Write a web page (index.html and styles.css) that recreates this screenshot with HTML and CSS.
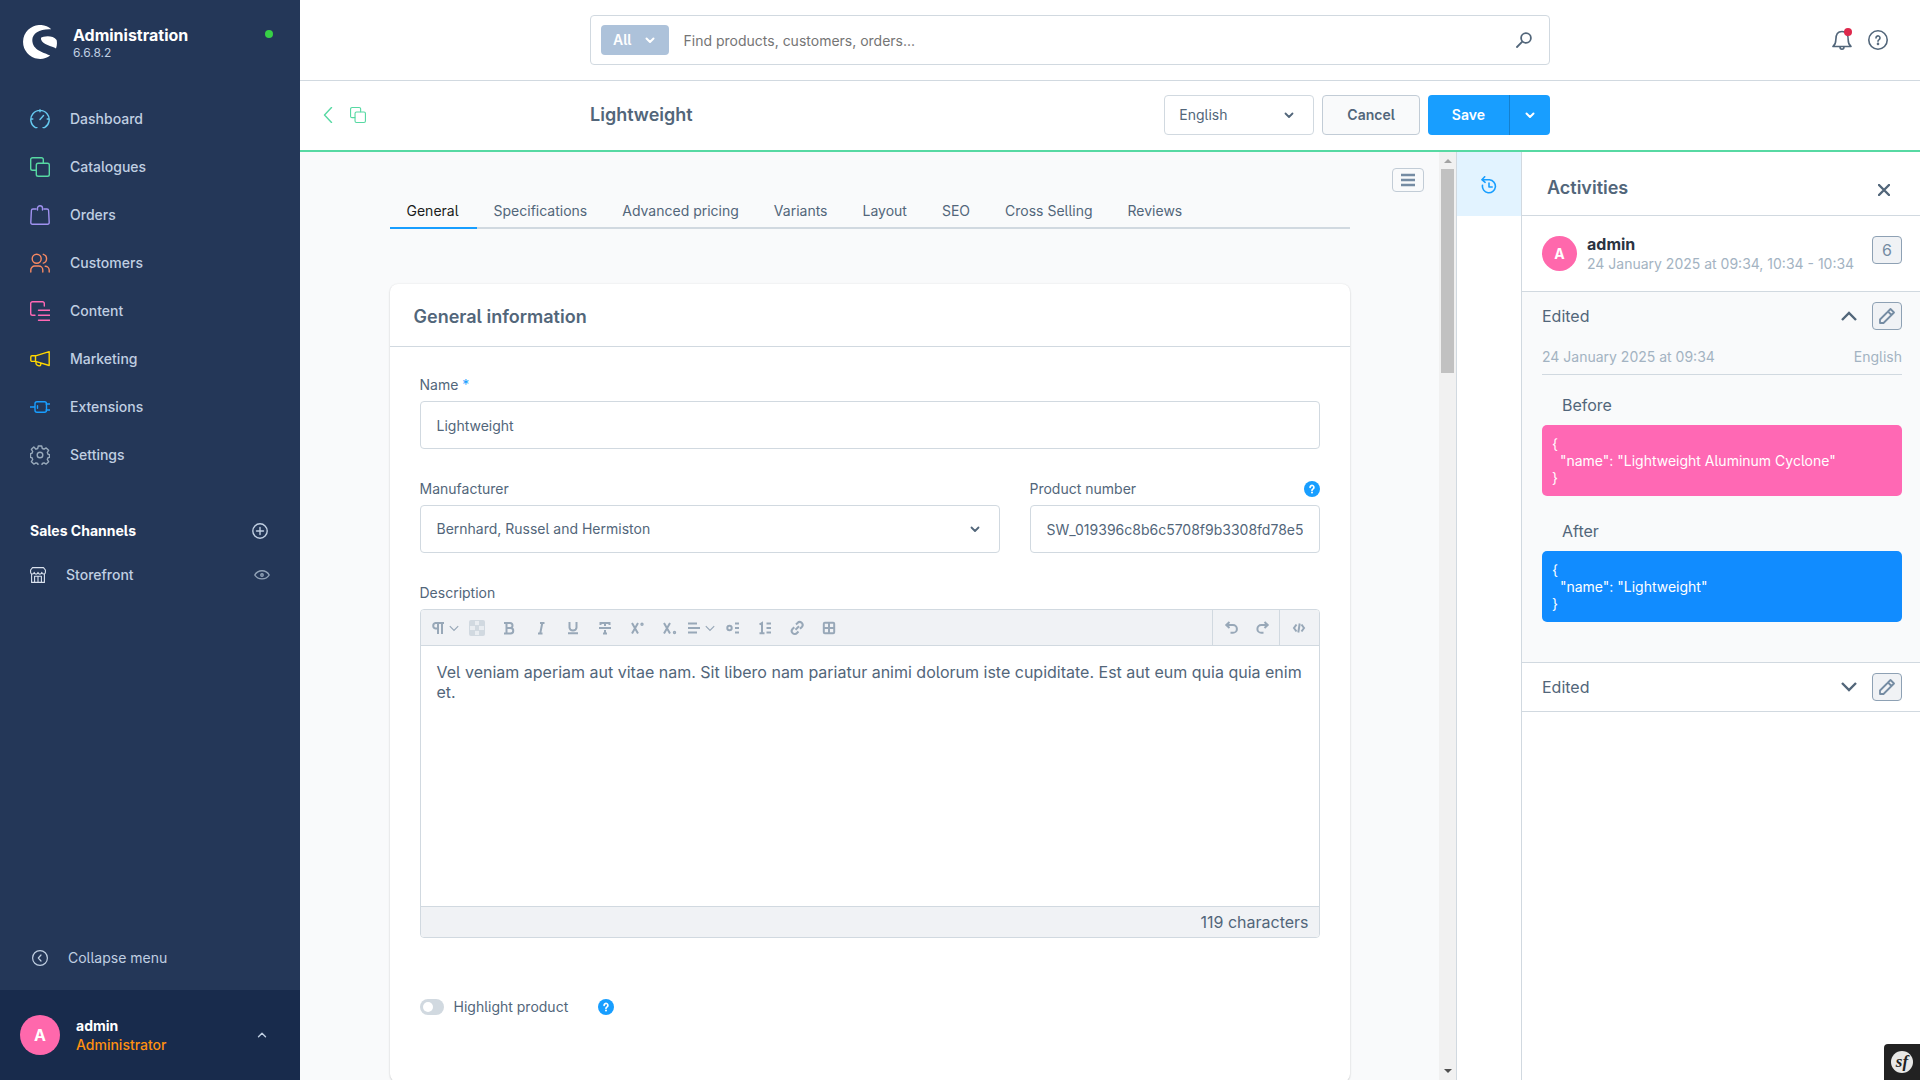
FILE: index.html
```html
<!DOCTYPE html>
<html lang="en">
<head>
<meta charset="utf-8">
<title>Lightweight | Products | Administration</title>
<link rel="stylesheet" href="styles.css">
</head>
<body>
<svg class="sprite" aria-hidden="true">
  <symbol id="chev-down" viewBox="0 0 10 10"><path d="M1.500 3.500 5 7l3.500-3.500"/></symbol>
  <symbol id="copy" viewBox="0 0 20 20"><path d="M13.300 6V2.500A1.800 1.800 0 0 0 11.500.700h-9A1.800 1.800 0 0 0 .700 2.500v9a1.800 1.800 0 0 0 1.800 1.800H6"/><rect x="6.300" y="6.300" width="13" height="13" rx="1.800"/></symbol>
  <symbol id="help" viewBox="0 0 16 16"><circle cx="8" cy="8" r="8" fill="#189eff" stroke="none"/><path d="M6.100 6.300a1.900 1.900 0 1 1 2.900 1.600c-.7.400-1 .7-1 1.300" stroke="#fff" stroke-width="1.700"/><circle cx="8" cy="11.600" r="1" fill="#fff" stroke="none"/></symbol>
  <symbol id="pencil" viewBox="0 0 16 16"><path d="M1 15v-3.500L11.500 1 15 4.500 4.500 15zM9 3.500 12.500 7"/></symbol>
</svg>
<div class="app">
  <aside class="menu">
    <header class="brand">
      <svg class="brand-logo" viewBox="0 0 34 34"><path d="M28.300 4.200A17 17 0 1 0 27.200 30.600C21 27.300 9.300 25.500 9.300 15 9.300 8 17 3.600 28.300 4.200z"/><path d="M18 12.700c2-1.600 12-3.200 15.600 2.300.600 2.600.500 5.500-.6 8.500-4-2.700-13.500-3.600-15-9.300z"/></svg>
      <div class="brand-text"><strong>Administration</strong><span>6.6.8.2</span></div>
      <i class="online"></i>
    </header>
    <nav class="nav">
      <a href="#"><svg class="dashboard" viewBox="0 0 20 20"><path d="M7 18.600H5.500A9.200 9.200 0 1 1 14.500 18.600H13M.8 10h2M17.200 10h2M10 .8v2M10 10.500l3.500-4"/></svg>Dashboard</a>
      <a href="#"><svg class="catalogues"><use href="#copy"/></svg>Catalogues</a>
      <a href="#"><svg class="orders" viewBox="0 0 20 20"><path d="M6 4H3A1.600 1.600 0 0 0 1.400 5.500L.8 17.500a1.600 1.600 0 0 0 1.600 1.700h15.200a1.600 1.600 0 0 0 1.600-1.700L18.600 5.500A1.600 1.600 0 0 0 17 4h-3M7.500 5V3a2.500 2.200 0 0 1 5 0v2"/></svg>Orders</a>
      <a href="#"><svg class="customers" viewBox="0 0 20 20"><circle cx="6.700" cy="5.700" r="4.500"/><path d="M.8 19v-2a4 4 0 0 1 4-4h4a4 4 0 0 1 4 4v2M13.300 1.300a4.600 4.600 0 0 1 0 8.800M15.200 13.200a4 4 0 0 1 4 4V19"/></svg>Customers</a>
      <a href="#"><svg class="contents" viewBox="0 0 20 20"><path d="M14.300 5V2.500A1.800 1.800 0 0 0 12.500.7h-10A1.800 1.800 0 0 0 .7 2.500v10a1.800 1.800 0 0 0 1.800 1.800H5M8.500 9.300h11.500M8.500 14.300h11.500M8.500 19.300h11.500"/></svg>Content</a>
      <a href="#"><svg class="marketing" viewBox="0 0 20 20"><path d="M19.200 2.700v13.800L5.500 12.400V6.800zM5.500 6.800H2A1.200 1.200 0 0 0 .8 8v3.200a1.200 1.200 0 0 0 1.200 1.200h3.500M6 12.700v1.800a2 2 0 0 0 1.500 1.800l1.500.5a1.500 1.500 0 0 0 1.800-1.200v-1.400"/></svg>Marketing</a>
      <a href="#"><svg class="extensions" viewBox="0 0 20 20"><path d="M0 10h5M16 7h4M16 13h4M7.500 8.700v2.600M7 4.700h7.500a2 2 0 0 1 2 2v6.600a2 2 0 0 1-2 2H7a2 2 0 0 1-2-2V6.700a2 2 0 0 1 2-2z"/></svg>Extensions</a>
      <a href="#"><svg class="settings" viewBox="0 0 20 20"><circle cx="10" cy="10" r="2.800"/><path d="M8.300 1h3.400l.6 2.500 1.700.7 2.200-1.300 2.400 2.400-1.300 2.200.7 1.700 1.500.4v2.800l-1.500.4-.7 1.700 1.300 2.200-2.400 2.400-2.200-1.300-1.700.7-.6 2.500H8.300l-.6-2.500-1.700-.7-2.200 1.300-2.400-2.400 1.300-2.200-.7-1.700-1.500-.4V8.600L2 8.200l.7-1.700-1.300-2.200 2.400-2.400L6 4.200l1.700-.7z"/></svg>Settings</a>
    </nav>
    <section class="channels">
      <h2>Sales Channels <button type="button" aria-label="Add sales channel"><svg viewBox="0 0 16 16"><circle cx="8" cy="8" r="7.200"/><path d="M8 4.500v7M4.500 8h7"/></svg></button></h2>
      <a href="#"><svg class="shop" viewBox="0 0 16 16"><path d="M2.500.6h11L15.400 3v2.200a1.800 1.800 0 0 1-3.600 0 1.900 1.900 0 0 1-3.800 0 1.900 1.900 0 0 1-3.800 0 1.800 1.800 0 0 1-3.600 0V3zM1.600 7v8.400h12.800V7M4.600 15.400V9.300h6.800v6.100M8 9.300v6"/></svg><span>Storefront</span><svg class="eye" viewBox="0 0 16 16"><path d="M.8 8C4 2.300 12 2.300 15.200 8 12 13.200 4 13.200.8 8z"/><circle cx="8" cy="8" r="1.200"/></svg></a>
    </section>
    <button class="collapse" type="button"><svg viewBox="0 0 16 16"><circle cx="8" cy="8" r="7.400"/><path d="M9 5 6.300 8 9 11"/></svg>Collapse menu</button>
    <button class="account" type="button">
      <span class="avatar">A</span>
      <span class="account-text"><strong>admin</strong><span>Administrator</span></span>
      <svg viewBox="0 0 10 10"><path d="M1.500 6.700 5 3.200l3.500 3.500"/></svg>
    </button>
  </aside>

  <div class="desktop">
    <header class="topbar">
      <div class="search">
        <button type="button">All <svg><use href="#chev-down"/></svg></button>
        <input type="search" aria-label="Search" placeholder="Find products, customers, orders...">
        <svg class="lens" viewBox="0 0 16 16"><circle cx="10" cy="6" r="4.900"/><path d="M6.300 9.700 1 15"/></svg>
      </div>
      <div class="tools">
        <button type="button" aria-label="Notifications"><svg viewBox="0 0 20 20"><path d="M1 16.500h18c-2-1.500-2.800-3-2.800-6.500 0-6-2-8.500-6.200-8.500S3.800 4 3.800 10c0 3.500-.8 5-2.800 6.500zM8 17a2 2.200 0 0 0 4 0"/></svg><i class="alert"></i></button>
        <button type="button" aria-label="Help"><svg viewBox="0 0 20 20"><circle cx="10" cy="10" r="9.200"/><path d="M8 8a2 2 0 1 1 3.100 1.600c-.8.500-1.100.9-1.100 1.700"/><circle cx="10" cy="13.900" r=".5"/></svg></button>
      </div>
    </header>
    <header class="smartbar">
      <div class="crumbs">
        <a href="#" aria-label="Back"><svg viewBox="0 0 16 16"><path d="M11.500.500 4.500 8l7 7.500"/></svg></a>
        <a href="#" aria-label="Products"><svg viewBox="0 0 20 20"><use href="#copy"/></svg></a>
      </div>
      <h1>Lightweight</h1>
      <div class="actions">
        <div class="select language"><select aria-label="Language"><option>English</option></select><svg><use href="#chev-down"/></svg></div>
        <button class="cancel" type="button">Cancel</button>
        <div class="split"><button type="button">Save</button><button type="button" aria-label="More save options"><svg><use href="#chev-down"/></svg></button></div>
      </div>
    </header>

    <div class="body">
      <main class="content">
        <button class="list-toggle" type="button" aria-label="Sections"><svg viewBox="0 0 14 14"><path d="M0 2h14M0 7h14M0 12h14"/></svg></button>
        <nav class="tabs">
          <a class="active" href="#">General</a><a href="#">Specifications</a><a href="#">Advanced pricing</a><a href="#">Variants</a><a href="#">Layout</a><a href="#">SEO</a><a href="#">Cross Selling</a><a href="#">Reviews</a>
        </nav>
        <section class="card">
          <h2>General information</h2>
          <form class="form">
            <div class="field"><label for="name">Name <em>*</em></label><input id="name" type="text" value="Lightweight"></div>
            <div class="row">
              <div class="field"><label for="maker">Manufacturer</label><div class="select"><select id="maker"><option>Bernhard, Russel and Hermiston</option></select><svg><use href="#chev-down"/></svg></div></div>
              <div class="field"><div class="label-line"><label for="number">Product number</label><svg class="help"><use href="#help"/></svg></div><input id="number" type="text" value="SW_019396c8b6c5708f9b3308fd78e5de11"></div>
            </div>
            <div class="field">
              <label for="description">Description</label>
              <div class="editor">
                <div class="toolbar">
                  <button class="wide" type="button" aria-label="Format"><svg viewBox="0 0 16 16"><path d="M14 3H5.500a2.800 2.800 0 0 0 0 5.500H8M8 3v11M12 3v11"/></svg><svg class="caret"><use href="#chev-down"/></svg></button>
                  <button type="button" aria-label="Text color"><svg class="checker" viewBox="0 0 16 16"><rect width="16" height="16" rx="2"/><path d="M6 1h4v4H6zM1 6h5v4H1zM10 6h5v4h-5zM6 11h4v4H6z"/></svg></button>
                  <button type="button" aria-label="Bold"><svg viewBox="0 0 16 16"><path d="M3 3h6a2.300 2.300 0 0 1 0 5H5.500M3 13.500h6.500a2.700 2.700 0 0 0 0-5.500M5.500 3v10"/></svg></button>
                  <button type="button" aria-label="Italic"><svg viewBox="0 0 16 16"><path d="M7 3h4.500M5 13.500h4.500M9.300 3 7.200 13.500"/></svg></button>
                  <button type="button" aria-label="Underline"><svg viewBox="0 0 16 16"><path d="M4.500 2v5.500a3.500 3 0 0 0 7 0V2M3 13.300h10"/></svg></button>
                  <button type="button" aria-label="Strikethrough"><svg viewBox="0 0 16 16"><path d="M3.500 5V3h9v2M2 8h12M8 3v3M8 10v3M6 13.500h4"/></svg></button>
                  <button type="button" aria-label="Superscript"><svg viewBox="0 0 16 16"><path d="m3 3 6 10.500M9 3 3 13.500"/><circle cx="13" cy="4.200" r=".7"/></svg></button>
                  <button type="button" aria-label="Subscript"><svg viewBox="0 0 16 16"><path d="m3 3 6 10.500M9 3 3 13.500"/><circle cx="13.500" cy="12.500" r=".7"/></svg></button>
                  <button class="wide" type="button" aria-label="Alignment"><svg viewBox="0 0 16 16"><path d="M2 3.500h9M2 8h12M2 12.500h9"/></svg><svg class="caret"><use href="#chev-down"/></svg></button>
                  <button type="button" aria-label="Bulleted list"><svg viewBox="0 0 16 16"><circle cx="4.500" cy="8" r="2.200"/><path d="M10 3.500h4M10 8h4M10 12.500h4"/></svg></button>
                  <button type="button" aria-label="Numbered list"><svg viewBox="0 0 16 16"><path d="M2.500 4.500 5 3v10.500M2.500 13.300h5M9.500 3.500h4.500M9.500 8h4.500M9.500 12.500h4.500"/></svg></button>
                  <button type="button" aria-label="Link"><svg viewBox="0 0 16 16"><path d="M7 4.500 8.500 3a2.800 2.800 0 0 1 4.300 4L11 8.800M9.500 11.500 8 13a2.800 2.800 0 0 1-4.500-4L5.300 7.200M6.500 9.800l3.500-3.500"/></svg></button>
                  <button type="button" aria-label="Table"><svg viewBox="0 0 16 16"><rect x="2.800" y="2.800" width="10.400" height="10.400" rx="1"/><path d="M8 3v10M3 8h10"/></svg></button>
                  <div class="tool-group history"><button type="button" aria-label="Undo"><svg viewBox="0 0 16 16"><path d="M6.500 2 3.300 5l3.200 3M3.500 5H10a3.800 3.800 0 0 1 0 7.800H7.500"/></svg></button><button type="button" aria-label="Redo"><svg viewBox="0 0 16 16"><path d="M9.500 2l3.200 3-3.200 3M12.500 5H6.300a3.800 3.800 0 0 0 0 7.800H8.500"/></svg></button></div>
                  <div class="tool-group source"><button type="button" aria-label="Code"><svg viewBox="0 0 16 16"><path d="M5.500 4.500 3 8l2.500 3.500M10.500 4.500 13 8l-2.500 3.500M8.700 3.500 7.300 12.500"/></svg></button></div>
                </div>
                <textarea id="description">Vel veniam aperiam aut vitae nam. Sit libero nam pariatur animi dolorum iste cupiditate. Est aut eum quia quia enim et.</textarea>
                <div class="count">119 characters</div>
              </div>
            </div>
            <div class="switch"><input id="highlight" type="checkbox"><label for="highlight">Highlight product</label><svg class="help"><use href="#help"/></svg></div>
          </form>
        </section>
      </main>
      <div class="scrollbar" aria-hidden="true"><i class="up"></i><i class="thumb"></i><i class="down"></i></div>

      <aside class="side">
        <nav class="side-nav"><button type="button" aria-label="Activities"><svg viewBox="0 0 16 18"><path d="M3.700.800.900 3.700l3.200 2.600M1.200 3.800h7.300A6.500 6.500 0 1 1 1.500 9.200M8 7v4h3.200"/></svg></button></nav>
        <div class="panel">
          <header class="panel-head"><h2>Activities</h2><button type="button" aria-label="Close"><svg viewBox="0 0 12 12"><path d="m1 1 10 10M11 1 1 11"/></svg></button></header>
          <section class="who">
            <span class="avatar">A</span>
            <div class="who-text"><strong>admin</strong><span>24 January 2025 at 09:34, 10:34 - 10:34</span></div>
            <span class="tile">6</span>
          </section>
          <section class="change open">
            <div class="change-head"><h3>Edited</h3><button class="fold" type="button" aria-label="Collapse"><svg viewBox="0 0 16 16"><path d="m1 12 7-7 7 7"/></svg></button><button class="tile" type="button" aria-label="Edit"><svg><use href="#pencil"/></svg></button></div>
            <div class="change-meta"><span>24 January 2025 at 09:34</span><span>English</span></div>
            <h4>Before</h4>
            <pre class="before">{
  "name": "Lightweight Aluminum Cyclone"
}</pre>
            <h4>After</h4>
            <pre class="after">{
  "name": "Lightweight"
}</pre>
          </section>
          <section class="change">
            <div class="change-head"><h3>Edited</h3><button class="fold" type="button" aria-label="Expand"><svg viewBox="0 0 16 16"><path d="m1 4 7 7 7-7"/></svg></button><button class="tile" type="button" aria-label="Edit"><svg><use href="#pencil"/></svg></button></div>
          </section>
        </div>
      </aside>
    </div>
  </div>
  <a class="profiler" href="#" aria-label="Symfony profiler"><svg viewBox="0 0 22 22"><circle cx="11" cy="11" r="11"/><text x="11" y="16" text-anchor="middle">sf</text></svg></a>
</div>
</body>
</html>
```
FILE: styles.css
```css
* { box-sizing: border-box; }
body { margin: 0; font: 14px/20px Inter, "Liberation Sans", sans-serif; font-feature-settings: "cv05"; color: #52667a; background: #fff; }
h1, h2, h3, h4, pre { margin: 0; font-weight: 400; }
button { padding: 0; border: 0; background: none; color: inherit; font: inherit; font-feature-settings: inherit; display: flex; align-items: center; }
input, select, textarea { font: inherit; font-feature-settings: inherit; color: inherit; }
a { color: inherit; text-decoration: none; }
em, i { font-style: normal; }
svg { display: block; flex: none; fill: none; stroke: currentColor; stroke-width: 1.4; stroke-linecap: round; stroke-linejoin: round; }
.sprite { position: absolute; width: 0; height: 0; }
.app { display: flex; height: 100vh; overflow: hidden; }

/* Main menu */
.menu { width: 300px; flex: none; display: flex; flex-direction: column; background: #243758; color: #c0cfe2; font-weight: 500; }
.brand { display: flex; align-items: flex-start; padding: 25px 27px 0 23px; height: 95px; }
.brand-logo { width: 34px; height: 34px; fill: #fff; stroke: none; }
.brand-text { flex: 1; margin-left: 16px; display: flex; flex-direction: column; }
.brand-text strong { font-size: 16px; font-weight: 700; color: #fff; }
.brand-text span { font-size: 12px; line-height: 16px; font-weight: 400; }
.online { width: 8px; height: 8px; margin: 5px 0 0; border-radius: 50%; background: #37d046; }
.nav { display: flex; flex-direction: column; }
.nav a { display: flex; align-items: center; gap: 20px; height: 48px; padding-left: 30px; }
.nav svg { width: 20px; height: 20px; }
.dashboard { color: #66c9ef; }
.catalogues { color: #57d9a3; }
.orders { color: #a092f0; }
.customers { color: #f88962; }
.contents { color: #ff68b4; }
.marketing { color: #ffd700; }
.extensions { color: #189eff; }
.settings { color: #98a9bb; }
.channels { margin-top: 38px; }
.channels h2 { display: flex; align-items: center; justify-content: space-between; height: 28px; padding: 0 32px 0 30px; font-size: 14px; font-weight: 700; color: #fff; }
.channels button { color: #c0cfe2; }
.channels svg { width: 16px; height: 16px; }
.channels a { display: flex; align-items: center; height: 60px; padding: 0 30px; }
.channels a span { flex: 1; margin-left: 20px; }
.channels .shop { color: #dbe3ef; stroke-width: 1.1; }
.channels .eye { color: #93a4b8; }
.collapse { margin-top: auto; height: 64px; padding-left: 32px; gap: 20px; font-weight: 400; }
.collapse svg { width: 16px; height: 16px; stroke-width: 1.2; }
.account { height: 90px; padding: 0 33px 0 20px; background: #182b4c; text-align: left; }
.avatar { display: flex; align-items: center; justify-content: center; width: 40px; height: 40px; border-radius: 50%; background: #ff68ac; color: #fff; font-size: 16px; font-weight: 700; }
.account-text { display: flex; flex-direction: column; flex: 1; margin-left: 16px; line-height: 19px; }
.account-text strong { color: #fff; font-weight: 700; }
.account-text span { color: #ff9010; }
.account svg { width: 10px; height: 10px; }

/* Header */
.desktop { flex: 1; min-width: 0; display: flex; flex-direction: column; }
.topbar { display: grid; grid-template-columns: 290px minmax(0, 1fr) 370px; align-items: center; height: 81px; flex: none; border-bottom: 1px solid #d1d9e0; }
.search { grid-column: 2; display: flex; align-items: center; height: 50px; padding: 0 17px 0 10px; border: 1px solid #d1d9e0; border-radius: 4px; }
.search button { height: 30px; padding: 0 14px 0 12px; gap: 13px; border-radius: 4px; background: #adc2da; color: #fff; font-weight: 600; }
.search button svg { width: 10px; height: 10px; stroke-width: 2; }
.search input { flex: 1; border: 0; padding: 2px 15px 0; outline: 0; appearance: none; }
.search input::placeholder { color: #757575; }
.lens { width: 16px; height: 16px; stroke-width: 1.8; }
.tools { display: flex; justify-content: flex-end; gap: 16px; padding-right: 32px; }
.tools svg { width: 20px; height: 20px; stroke-width: 1.6; }
.tools button { position: relative; }
.alert { position: absolute; top: -2px; right: 0; width: 8px; height: 8px; border-radius: 50%; background: #de294c; }
.smartbar { display: grid; grid-template-columns: 290px minmax(0, 1fr) auto 370px; align-items: center; height: 71px; flex: none; padding-bottom: 1px; border-bottom: 2px solid #57d9a3; }
.crumbs { display: flex; gap: 14px; padding-left: 20px; color: #57d9a3; }
.crumbs svg { width: 16px; height: 16px; }
.smartbar h1 { font-size: 18px; font-weight: 600; line-height: 24px; }
.actions { display: flex; gap: 8px; }
.select { display: grid; align-items: center; }
.select select, .select svg { grid-area: 1 / 1; }
.select select { width: 100%; height: 48px; padding: 0 16px; border: 1px solid #d1d9e0; border-radius: 4px; background: #fff; appearance: none; }
.select svg { width: 10px; height: 10px; margin-right: 20px; justify-self: end; stroke-width: 1.8; pointer-events: none; }
.language { width: 150px; }
.language select { height: 40px; padding: 0 14px; }
.cancel { height: 40px; padding: 0 24px; border: 1px solid #c2ccd6; border-radius: 4px; background: #f9fafb; font-weight: 600; }
.split { display: flex; height: 40px; border-radius: 4px; overflow: hidden; background: #189eff; color: #fff; font-weight: 600; }
.split button { padding: 0 24px; }
.split button + button { padding: 0 15px; border-left: 1px solid #1480cf; }
.split svg { width: 10px; height: 10px; stroke-width: 2; }

/* Product form */
.body { flex: 1; min-height: 0; display: flex; }
.content { flex: 1; min-width: 0; display: flex; flex-direction: column; align-items: center; overflow: hidden; background: #f9fafb; }
.list-toggle { align-self: flex-end; justify-content: center; width: 32px; height: 24px; flex: none; margin: 16px 15px 0 0; border: 1px solid #c2ccd6; border-radius: 4px; background: #f9fafb; color: #758ca3; }
.list-toggle svg { width: 14px; height: 14px; stroke-width: 2.4; stroke-linecap: butt; }
.tabs { display: flex; width: 100%; max-width: 960px; height: 37px; flex: none; border-bottom: 2px solid #d1d9e0; }
.tabs a { margin-bottom: -2px; padding: 9px 18px 0 17px; }
.tabs .active { border-bottom: 2px solid #189eff; color: #1a1c20; }
.card { width: 100%; max-width: 960px; flex: none; margin-top: 55px; padding-bottom: 65px; border-radius: 8px; background: #fff; box-shadow: 0 1px 2px rgba(0, 0, 0, .16), 0 0 2px rgba(0, 0, 0, .08); }
.card h2 { height: 63px; padding: 20px 24px; border-bottom: 1px solid #d1d9e0; font-size: 18px; line-height: 26px; font-weight: 600; }
.form { display: flex; flex-direction: column; gap: 30px; padding: 28px 30px 0; }
.row { display: grid; grid-template-columns: 2fr 1fr; gap: 30px; }
.field { display: flex; flex-direction: column; gap: 6px; }
.field em { color: #189eff; }
.field > input { width: 100%; height: 48px; padding: 0 16px; border: 1px solid #d1d9e0; border-radius: 4px; background: #fff; }
.label-line { display: flex; align-items: center; justify-content: space-between; }
.help { width: 16px; height: 16px; }
.editor { border: 1px solid #d1d9e0; border-radius: 4px; overflow: hidden; }
.toolbar { display: flex; height: 36px; padding-left: 8px; background: #f0f2f5; color: #98a8b8; border-bottom: 1px solid #d1d9e0; }
.toolbar button { width: 32px; justify-content: center; }
.toolbar .wide { gap: 2px; }
.toolbar svg { width: 16px; height: 16px; stroke-width: 2; stroke-linecap: butt; stroke-linejoin: miter; }
.toolbar .caret { width: 12px; height: 12px; stroke-width: 1; }
.toolbar .checker { fill: #d1d9e0; stroke: none; }
.checker path { fill: #e9edf1; }
.tool-group { display: flex; border-left: 1px solid #d1d9e0; }
.history { margin-left: auto; padding-left: 2px; }
.source button { width: 39px; }
.editor textarea { display: block; width: 100%; height: 260px; padding: 16px; border: 0; outline: 0; resize: none; font-size: 16px; line-height: 20px; }
.count { height: 31px; padding: 0 10px; border-top: 1px solid #d1d9e0; background: #f0f2f5; font-size: 16px; line-height: 30px; text-align: right; }
.switch { display: flex; align-items: center; margin-top: 29px; }
.switch input { appearance: none; display: flex; align-items: center; width: 24px; height: 16px; margin: 0 10px 0 0; padding-left: 3px; border-radius: 8px; background: #d1d9e0; }
.switch input::before { content: ""; width: 10px; height: 10px; border-radius: 50%; background: #fff; }
.switch .help { margin-left: 30px; }
.scrollbar { display: flex; flex-direction: column; align-items: center; width: 17px; flex: none; background: #f1f1f1; }
.up { border: 4px solid transparent; border-top-width: 0; border-bottom-color: #a3a3a3; margin: 7px 0 6px; }
.thumb { width: 13px; height: 204px; background: #c1c1c1; }
.down { border: 4px solid transparent; border-bottom-width: 0; border-top-color: #505050; margin: auto 0 7px; }

/* Activity sidebar */
.side { display: flex; width: 464px; flex: none; border-left: 1px solid #d1d9e0; }
.side-nav { width: 64px; flex: none; }
.side-nav button { justify-content: center; width: 64px; height: 64px; padding-top: 2px; background: #e2f3ff; color: #189eff; }
.side-nav svg { width: 16px; height: 18px; stroke-width: 1.6; }
.panel { flex: 1; min-width: 0; border-left: 1px solid #d1d9e0; }
.panel-head { display: flex; align-items: center; justify-content: space-between; height: 64px; padding: 8px 30px 0 25px; border-bottom: 1px solid #d1d9e0; }
.panel-head h2 { font-size: 18px; font-weight: 600; }
.panel-head svg { width: 12px; height: 12px; margin-top: 4px; stroke-width: 2.4; }
.who { display: flex; padding: 20px 18px 0 20px; height: 76px; border-bottom: 1px solid #d1d9e0; }
.who .avatar { width: 35px; height: 35px; font-size: 14px; }
.who-text { display: flex; flex-direction: column; flex: 1; margin-left: 10px; white-space: nowrap; }
.who-text strong { font-size: 16px; line-height: 17px; font-weight: 700; color: #2b3442; }
.who-text span { line-height: 22px; }
.who-text span, .change-meta { color: #a3b3c2; }
.tile { display: flex; align-items: center; justify-content: center; width: 30px; height: 28px; border: 1px solid #8ea1b4; border-radius: 4px; background: #f0f2f5; color: #758ca3; font-size: 16px; }
.tile svg { width: 16px; height: 16px; stroke-width: 1.8; }
.change { padding: 0 18px 0 20px; border-bottom: 1px solid #d1d9e0; }
.change.open { padding-bottom: 40px; background: #f9fafb; }
.change-head { display: flex; align-items: center; height: 48px; }
.change h3, .change h4 { font-size: 16px; line-height: 20px; }
.change h3 { flex: 1; }
.fold svg { width: 16px; height: 16px; margin-right: 15px; stroke-width: 2.4; stroke-linecap: butt; stroke-linejoin: miter; }
.change-meta { display: flex; justify-content: space-between; height: 35px; padding-top: 7px; border-bottom: 1px solid #d1d9e0; }
.change h4 { margin: 20px 0 10px 20px; }
.change pre { padding: 10px; border-radius: 5px; color: #fff; font: inherit; line-height: 17px; white-space: pre-wrap; }
.change pre + h4 { margin-top: 25px; }
.before { background: #ff68b4; }
.after { background: #118cff; }

/* Profiler badge, over the page corner */
.profiler { position: fixed; right: 0; bottom: 0; display: flex; align-items: center; justify-content: center; width: 36px; height: 36px; border-radius: 4px 0 0; background: #222; }
.profiler svg { width: 22px; height: 22px; fill: #e8e8e6; stroke: none; }
.profiler text { fill: #222; font: italic 700 17px "Liberation Serif", serif; }
```
